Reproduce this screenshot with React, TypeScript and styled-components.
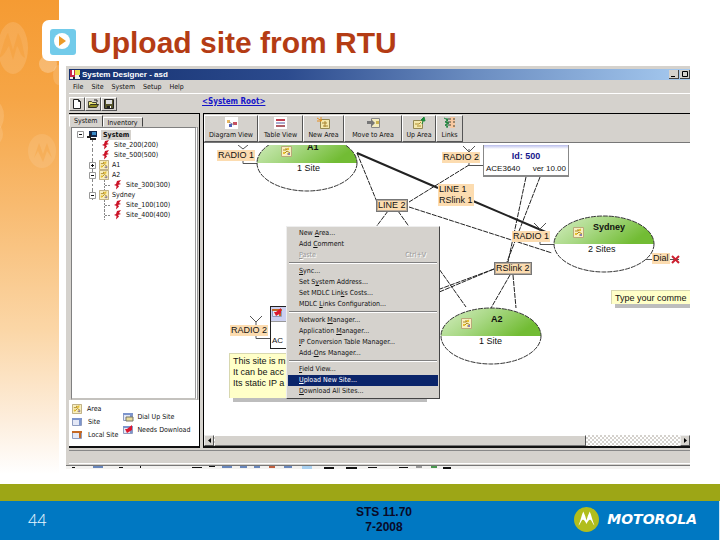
import React from "react";
import styled, { createGlobalStyle, css } from "styled-components";

const ui = `"DejaVu Sans Condensed", "Liberation Sans", sans-serif`;
const sans = `"Liberation Sans", Arial, sans-serif`;
const face = "#d5d2cd";

const Global = createGlobalStyle`
  * { box-sizing: border-box; }
  body { margin: 0; background: #fff; font-family: ${sans}; }
  button { font: inherit; color: inherit; margin: 0; padding: 0; border: 0; background: none; }
  svg { display: block; flex: none; }
`;

const Slide = styled.div`
  min-height: 100vh;
  display: flex;
  flex-direction: column;
  overflow: hidden;
`;

const Upper = styled.div`
  flex: 1;
  display: flex;
  background: #fff;
`;

const Rail = styled.aside`
  width: 59px;
  flex: none;
  overflow: hidden;
  background: linear-gradient(#f59b33 0, #f6a545 20%, #f8bb71 43%, #fbd6a6 68%, #fdeedd 87%, #fff 98%);
`;

const Content = styled.main`
  flex: 1;
  min-width: 0;
  display: flex;
  flex-direction: column;
  padding: 20px 30px 15px 7px;
`;

const Heading = styled.header`
  display: flex;
  align-items: center;
  height: 46px;
  gap: 6px;
  margin-left: -24px;
`;

const Badge = styled.div`
  width: 42px;
  height: 41px;
  margin-bottom: 5px;
  padding: 9px 8px;
  border-radius: 7px;
  background: #fff;
`;

const Title = styled.h1`
  margin: 0 0 1px;
  font-size: 30px;
  line-height: 36px;
  font-weight: bold;
  color: #b43c14;
  white-space: nowrap;
`;

const AppWindow = styled.section`
  flex: 1;
  display: flex;
  flex-direction: column;
  min-width: 0;
  padding: 3px 0 0 3px;
  background: ${face};
  font-family: ${ui};
  font-size: 7px;
  line-height: 10px;
  color: #111;
  overflow: hidden;
`;

const TitleBar = styled.div`
  display: flex;
  align-items: center;
  height: 11px;
  gap: 2px;
  padding-left: 1px;
  color: #fff;
  font-weight: bold;
  background: linear-gradient(90deg, #14306f, #2c4b8e 35%, #6a8cc0 65%, #a6caf0);
`;

const WindowName = styled.span`
  flex: 1;
  font-size: 8px;
  font-family: ${sans};
`;

const WindowControl = styled.button`
  width: 10px;
  height: 9px;
  background: ${face};
  border-right: 1px solid #444;
  border-bottom: 1px solid #444;
  &:last-child { margin-left: -1px; }
`;

const MenuBar = styled.nav`
  display: flex;
  height: 14px;
  gap: 8px;
  padding: 1px 4px 0;
  border-bottom: 1px solid #fff;
`;

const FileBar = styled.div`
  display: flex;
  align-items: center;
  height: 19px;
`;

const FileButton = styled.button`
  width: 16px;
  height: 14px;
  padding: 1px 2px;
  border: 1px solid;
  border-color: #fff #555 #555 #fff;
`;

const RootLink = styled.a`
  margin: 0 0 4px 85px;
  font-size: 8px;
  font-weight: bold;
  color: #1616c8;
`;

const Panes = styled.div`
  flex: 1;
  display: grid;
  grid-template-columns: 131px 1fr;
  gap: 3px;
  min-height: 0;
`;

const Pane = styled.section`
  display: flex;
  flex-direction: column;
  min-width: 0;
  border-top: 1px solid #000;
  border-bottom: 2px solid #111;
`;

const TreePane = styled(Pane)`
  border-right: 1px solid #000;
`;

const DiagramPane = styled(Pane)`
  border-left: 1px solid #000;
`;

const Tabs = styled.div`
  display: flex;
  align-items: flex-end;
  height: 13px;
`;

const Tab = styled.button<{ $active?: boolean }>`
  height: ${(p) => (p.$active ? 12 : 10)}px;
  padding: 0 4px;
  font-size: 7px;
  border: 1px solid;
  border-color: #fff #444 transparent #fff;
`;

const Tree = styled.ul`
  flex: 1;
  margin: 0 1px 0 2px;
  padding: 1px 0 0;
  list-style: none;
  background: #fff;
  border: 1px solid #808080;
  border-right: 3px double #999;
  border-bottom: 2px solid #c4c2be;
`;

const TreeRow = styled.li<{ $level: number; $trunk?: boolean }>`
  display: flex;
  align-items: center;
  gap: 3px;
  height: ${(p) => (p.$level === 0 ? 11 : 10)}px;
  padding-left: ${(p) => [5, 17, 29][p.$level]}px;
  ${(p) => p.$trunk && css`
    background: repeating-linear-gradient(#888 0 2px, transparent 2px 4px) 20px 0 / 1px 100% no-repeat;
  `}
`;

const Leaf = styled.span<{ $bold?: boolean }>`
  ${(p) => p.$bold && css`
    font-weight: bold;
    background: ${face};
    padding: 0 2px;
  `}
`;

const Legend = styled.div`
  display: flex;
  gap: 5px;
  height: 46px;
  padding: 4px 3px;
  background: #fff;
  white-space: nowrap;
`;

const LegendColumn = styled.div<{ $center?: boolean }>`
  display: flex;
  flex-direction: column;
  justify-content: ${(p) => (p.$center ? "center" : "flex-start")};
  gap: 3px;
`;

const LegendItem = styled.span<{ $tight?: boolean }>`
  display: flex;
  align-items: center;
  gap: ${(p) => (p.$tight ? 3 : 5)}px;
  height: 10px;
`;

const ViewBar = styled.div`
  display: flex;
  height: 31px;
  padding-top: 1px;
  border-bottom: 2px solid #fff;
  box-shadow: inset 0 -1px #777;
`;

const ViewButton = styled.button<{ $w: number }>`
  width: ${(p) => p.$w}px;
  height: 27px;
  display: flex;
  flex-direction: column;
  align-items: center;
  white-space: nowrap;
  border: 1px solid;
  border-color: #fff #555 #555 #fff;
  line-height: 9px;
  svg { margin: 1px 0 2px; }
`;

const Canvas = styled.div`
  position: relative;
  flex: 1;
  min-height: 290px;
  overflow: hidden;
  background: #fff;
  font-family: ${sans};
  font-size: 9px;
`;

const Wires = styled.svg`
  position: absolute;
  left: 0;
  top: 0;
  width: 100%;
  height: 100%;
`;

const Node = styled.div<{ $x: number; $y: number }>`
  position: absolute;
  left: ${(p) => p.$x}px;
  top: ${(p) => p.$y}px;
  line-height: 11px;
  white-space: nowrap;
`;

const Port = styled(Node)<{ $framed?: boolean }>`
  padding: 0 1px;
  background: #fcdcb0;
  ${(p) => p.$framed && css`
    border: 1px solid #777;
    outline: 1px solid #b9aa98;
    outline-offset: -2px;
  `}
`;

const AreaName = styled(Node)`
  font-weight: bold;
`;

const DeviceCard = styled(Node)`
  width: 86px;
  height: 32px;
  padding-top: 6px;
  text-align: center;
  background: linear-gradient(#b8bcec, #fff 4px);
  border: 1px solid #888;
  border-top: 0;
  border-bottom-width: 2px;
`;

const DeviceId = styled.strong`
  display: block;
  color: #16168c;
`;

const DeviceInfo = styled.span`
  display: flex;
  justify-content: space-between;
  padding: 1px 2px;
  font-size: 8px;
`;

const LowerCard = styled(Node)`
  width: 86px;
  height: 43px;
  border: 1px solid #222;
  background: #fff;
`;

const CardTop = styled.div`
  height: 15px;
  padding: 1px;
  background: #ccd0f0;
  border-bottom: 1px solid #999;
`;

const CardText = styled.div`
  padding: 13px 1px 0;
  font-size: 8px;
`;

const Note = styled(Node)<{ $w: number; $h: number }>`
  width: ${(p) => p.$w}px;
  height: ${(p) => p.$h}px;
  padding: 2px 3px;
  background: #ffffc8;
  border-top: 1px solid #d8d8b0;
  border-left: 1px solid #d8d8b0;
  box-shadow: 4px 4px #bdbdbd;
`;

const ContextMenu = styled.div`
  position: absolute;
  left: 82px;
  top: 81px;
  width: 154px;
  padding: 1px;
  display: flex;
  flex-direction: column;
  background: ${face};
  border: 1px solid;
  border-color: #eee #444 #444 #eee;
  font-family: ${ui};
  font-size: 7px;
`;

const MenuItem = styled.button<{ $selected?: boolean }>`
  display: flex;
  justify-content: space-between;
  height: 11px;
  line-height: 11px;
  padding: 0 12px 0 11px;
  text-align: left;
  color: ${(p) => (p.$selected ? "#fff" : "#111")};
  background: ${(p) => (p.$selected ? "#0a246a" : "transparent")};
  &:disabled { color: #999; text-shadow: 1px 1px #fff; }
`;

const Separator = styled.hr`
  width: calc(100% - 2px);
  height: 2px;
  margin: 1px 1px 2px;
  border: 0;
  border-top: 1px solid #808080;
  border-bottom: 1px solid #fff;
`;

const ScrollRow = styled.div`
  display: flex;
  height: 11px;
  gap: 1px;
  background: repeating-conic-gradient(#fff 0 25%, ${face} 0 50%) 0 0 / 4px 4px;
`;

const ScrollButton = styled.button`
  width: 10px;
  padding: 2px 3px;
  background: ${face};
  border: 1px solid;
  border-color: #eee #555 #555 #eee;
`;

const Thumb = styled.div`
  flex: 4;
  background: ${face};
  border-top: 1px solid #fff;
  border-right: 1px solid #555;
  border-bottom: 1px solid #777;
`;

const TrackRest = styled.div`
  flex: 1;
`;

const StatusBar = styled.div`
  height: 14px;
  margin: 2px 0 1px;
  border-top: 1px solid #888;
  border-bottom: 1px solid #fff;
`;

const DockStrip = styled.div`
  height: 4px;
  margin-left: -3px;
  background: #f3f2f0;
  border-top: 1px solid #777;
`;

const GreenBand = styled.div`
  height: 17px;
  background: #9da616;
`;

const Footer = styled.footer`
  display: grid;
  grid-template-columns: 59px 1fr auto 1fr;
  align-items: center;
  height: 40px;
  padding-right: 10px;
  background: #0078c2;
  border-right: 1px solid #cfe3f2;
`;

const PageNumber = styled.span`
  padding-left: 28px;
  margin-bottom: 3px;
  font: 300 16px "Open Sans", sans-serif;
  color: #e6f6ff;
`;

const Edition = styled.p`
  grid-column: 3;
  margin: 0 0 3px;
  text-align: center;
  font-size: 12px;
  line-height: 15px;
  font-weight: bold;
  color: #0a0a28;
`;

const Brand = styled.div`
  display: flex;
  align-items: center;
  justify-content: flex-end;
  gap: 8px;
  margin-bottom: 4px;
  padding-right: 12px;
  color: #fff;
  font: italic bold 14px "DejaVu Sans", sans-serif;
`;

const Watermarks = () => (
  <svg width="59" height="200" fill="#fff" aria-hidden="true">
    <ellipse cx="13" cy="48" rx="15" ry="26" opacity=".13" />
    <path d="M-1 58C4 44 4 39 8 33L13 50L18 33C22 39 23 48 25 58C20 56 20 50 17 46L13 60L9 46C6 50 5 55-1 58Z" fill="#f59b33" opacity=".4" />
    <circle cx="48" cy="64" r="9" opacity=".25" />
    <ellipse cx="-4" cy="116" rx="8" ry="14" opacity=".13" />
    <ellipse cx="-4" cy="134" rx="7" ry="10" opacity=".12" />
    <ellipse cx="42" cy="151" rx="14" ry="17" opacity=".1" />
    <path d="M34 158L39 143L43 154L47 143L52 158L47 151L43 162L38 151Z" fill="#f59b33" opacity=".3" />
    <ellipse cx="58" cy="75" rx="5" ry="10" opacity=".14" />
  </svg>
);

const AreaIcon = ({ size = 11 }: { size?: number }) => (
  <svg width={size} height={size} viewBox="0 0 11 11" aria-hidden="true">
    <path d="M.5.500h10v10H.5z" fill="#f8efc0" stroke="#b9a97a" />
    <path d="M2 4h3V2M5 4l3-2M3 8l3-3 3 2M6 8h3" stroke="#b08a20" fill="none" />
    <path d="M6 2h2v2H6zM2 6h2v2H2z" fill="#e8c030" />
    <path d="M7 7h2v2H7z" fill="#8a7fae" />
  </svg>
);

const BoltIcon = () => (
  <svg width="10" height="10" viewBox="0 0 10 10" aria-hidden="true">
    <path d="M8 0L4 1L3 4L1 5L3.500 6L3 9.500L6 6.500L5 5L8 4L6 3Z" fill="#cc1428" />
  </svg>
);

const Expander = ({ open }: { open?: boolean }) => (
  <svg width="7" height="7" aria-hidden="true">
    <path d="M.5.500h6v6h-6z" fill="#fff" stroke="#999" />
    <path d={open ? "M2 3.500h3" : "M2 3.500h3M3.500 2v3"} stroke="#111" />
  </svg>
);

const RootIcon = () => (
  <svg width="11" height="10" aria-hidden="true">
    <path d="M2 1h8v6H2z" fill="#14284c" />
    <path d="M5 2h4v3H5z" fill="#3a8cc8" />
    <path d="M0 7h3V4M3 9h6" stroke="#222" fill="none" strokeWidth="2" />
  </svg>
);

const SiteIcon = ({ top, bolt, dial }: { top: string; bolt?: boolean; dial?: boolean }) => (
  <svg width="11" height="10" aria-hidden="true">
    <path d="M.5 1.500h9v7h-9z" fill="#e4e8f6" stroke="#8e9cc0" />
    <path d="M0 1h10v2H0zM7 3h2v5H7z" fill={top} />
    {bolt && <path d="M9 0L4 4L2 4L4 8L9 5Z" fill="#dc1830" />}
    {dial && <path d="M3 5h7v4H3z" fill="#eadc9c" stroke="#776" />}
  </svg>
);

const toolArt: Record<string, React.ReactNode> = {
  "Diagram View": <><path d="M0 0h13v12H0z" fill="#fff" /><path d="M2 3h3v3H2z" fill="#e8b860" /><path d="M4 7h3v3H4z" fill="#5060b8" /><path d="M8 5h4v3H8z" fill="#c85060" /><path d="M4 5l5 3" stroke="#889" /></>,
  "Table View": <><path d="M0 0h13v12H0z" fill="#fff" /><path d="M2 3h9" stroke="#c04050" strokeWidth="2" /><path d="M2 6h9" stroke="#555aa0" /><path d="M2 9h9" stroke="#b06068" strokeWidth="2" /></>,
  "New Area": <><path d="M3.500 2.500h9v9h-9z" fill="#f4e8ac" stroke="#948852" /><path d="M5 6h5M6 9h5M8 4v6" stroke="#a88430" /><path d="M0 1l5 3M4 0v4M0 4h4" stroke="#e89020" /></>,
  "Move to Area": <><path d="M4.500 1.500h8v9h-8z" fill="#f4ecbe" stroke="#888" /><path d="M0 4h4V2l4 4-4 4V7H0z" fill="#777" /><path d="M9 4h3v3H9z" fill="#ccb450" /></>,
  "Up Area": <><path d="M.5 3.500h9v8h-9z" fill="#f4e8ac" stroke="#948852" /><path d="M2 7h4l2-2M4 9h4" stroke="#b09030" fill="none" /><path d="M9 7l2-5M8 3l3-3 1 4z" stroke="#1b8a3a" fill="#1b8a3a" /></>,
  Links: <><path d="M1 1l4 2-3 2 4 1-4 2 3 2M4 1v10" stroke="#158038" fill="none" /><path d="M7 0h5v11H7z" fill="#f8c8a0" /><path d="M5 2h3M5 5h3M5 8h3M10 2h2M10 5h2M10 9h2" stroke="#443" /></>,
};

const tools: [string, number][] = [
  ["Diagram View", 54], ["Table View", 45], ["New Area", 41],
  ["Move to Area", 58], ["Up Area", 34], ["Links", 27],
];

const tree = [
  { name: "Site_200(200)", level: 2 }, { name: "Site_500(500)", level: 2 },
  { name: "A1", level: 1 }, { name: "A2", level: 1, open: true },
  { name: "Site_300(300)", level: 3 }, { name: "Sydney", level: 1, open: true },
  { name: "Site_100(100)", level: 3 }, { name: "Site_400(400)", level: 3 },
];

const menuGroups: { label: [string, string, string]; key?: string; off?: boolean; on?: boolean }[][] = [
  [{ label: ["New ", "A", "rea..."] }, { label: ["Add ", "C", "omment"] }, { label: ["", "P", "aste"], key: "Ctrl+V", off: true }],
  [{ label: ["", "S", "ync..."] }, { label: ["Set S", "y", "stem Address..."] }, { label: ["Set MDLC Lin", "k", "s Costs..."] }, { label: ["MDLC ", "L", "inks Configuration..."] }],
  [{ label: ["Network ", "M", "anager..."] }, { label: ["Application ", "M", "anager..."] }, { label: ["", "I", "P Conversion Table Manager..."] }, { label: ["Add-", "O", "ns Manager..."] }],
  [{ label: ["", "F", "ield View..."] }, { label: ["", "U", "pload New Site..."], on: true }, { label: ["", "D", "ownload All Sites..."] }],
];

const areas = [[103, 18], [400, 99], [287, 191]];

const Diagram = () => (
  <Wires aria-hidden="true">
    <defs>
      <linearGradient id="leaf" x1="0" y1="0" x2="1" y2=".4">
        <stop offset="0" stopColor="#d8efc6" />
        <stop offset=".5" stopColor="#a8d884" />
        <stop offset="1" stopColor="#72bc34" />
      </linearGradient>
    </defs>
    <g fill="none" stroke="#222">
      <path strokeWidth="2" d="M153 8L234 43M269 56L344 88" />
      <path strokeDasharray="5 1" d="M153 8L173 57M205 57L265 20M205 62L348 108M184 66L172 82M194 66L262 162M322 32L304 117M336 32L303 117M290 124L90 198M290 124L90 208M306 130L287 163M309 130L312 163" />
      <path stroke="#555" d="M39 15V18.500H54M34 0L39 4L44 0M265 17V20.500H279M259 1L265 7L271 1M265 4V7M52 191V193.500H66M46 171L52 177L58 171M52 177V181M330 78L336 84L342 78M336 84V88M336 97V99.500H350M441 114.500H449M466 114.500H475" />
      <path stroke="#cc2030" strokeWidth="2" d="M468 111L475 118M475 111L468 118" />
    </g>
    {areas.map(([x, y]) => (
      <g key={x}>
        <ellipse cx={x} cy={y} rx="50" ry="28" fill="#fff" />
        <path d={`M${x - 50} ${y}A50 28 0 0 1 ${x + 50} ${y}Z`} fill="url(#leaf)" />
        <ellipse cx={x} cy={y} rx="50" ry="28" fill="none" stroke="#333" strokeDasharray="5 1" />
      </g>
    ))}
  </Wires>
);

export default function App() {
  return (
    <>
      <Global />
      <Slide>
        <Upper>
          <Rail><Watermarks /></Rail>
          <Content>
            <Heading>
              <Badge>
                <svg width="26" height="26" viewBox="0 0 26 26" aria-hidden="true">
                  <rect width="26" height="26" rx="3" fill="#72cbea" />
                  <circle cx="12" cy="12" r="8" fill="#fff" />
                  <path d="M9 7L16 12L9 17Z" fill="#ec9b28" />
                </svg>
              </Badge>
              <Title>Upload site from RTU</Title>
            </Heading>
            <AppWindow>
              <TitleBar>
                <svg width="10" height="10" aria-hidden="true">
                  <path d="M0 0h5v8H0z" fill="#c82848" /><path d="M5 0h5v5H5z" fill="#e8e050" />
                  <path d="M2 0h2v5H2z" fill="#fff" /><path d="M0 8h10M5 6h4" stroke="#eee" strokeWidth="2" />
                  <path d="M3 7h2v2H3z" fill="#222" />
                </svg>
                <WindowName>System Designer - asd</WindowName>
                <WindowControl aria-label="Minimize"><svg width="8" height="8"><path d="M2 6.500h4" stroke="#000" /></svg></WindowControl>
                <WindowControl aria-label="Maximize"><svg width="8" height="8"><path d="M2.500 1.500h5v5h-5z" stroke="#000" fill="none" /></svg></WindowControl>
              </TitleBar>
              <MenuBar>
                {["File", "Site", "System", "Setup", "Help"].map((m) => <button key={m}>{m}</button>)}
              </MenuBar>
              <FileBar>
                <FileButton aria-label="New"><svg width="10" height="10"><path d="M1.500.500h5l2 2v7h-7z" fill="#fff" stroke="#222" /><path d="M6.500.500v2h2" fill="none" stroke="#222" /></svg></FileButton>
                <FileButton aria-label="Open"><svg width="11" height="10"><path d="M.5 8.500v-6h3l1 1h4v2" fill="#e8e478" stroke="#443" /><path d="M.5 8.500l2-3h8l-2 3z" fill="#8e8a20" stroke="#332" /><path d="M6 1h3v2" stroke="#222" fill="none" /></svg></FileButton>
                <FileButton aria-label="Save"><svg width="10" height="10"><path d="M.5.500h9v9h-9z" fill="#56552c" stroke="#222" /><path d="M2 1h6v4H2z" fill="#ddd" /><path d="M3 7h4v2H3z" fill="#222" /><path d="M6 7h1v2H6z" fill="#fff" /></svg></FileButton>
                <RootLink href="#root">&lt;System Root&gt;</RootLink>
              </FileBar>
              <Panes>
                <TreePane>
                  <Tabs role="tablist">
                    <Tab role="tab" aria-selected="true" $active>System</Tab>
                    <Tab role="tab" aria-selected="false">Inventory</Tab>
                  </Tabs>
                  <Tree>
                    <TreeRow $level={0}><Expander open /><RootIcon /><Leaf $bold>System</Leaf></TreeRow>
                    {tree.map((n, i) => (
                      <TreeRow key={n.name} $level={n.level === 1 ? 1 : 2} $trunk={i < 6}>
                        {n.level === 1 && <><Expander open={n.open} /><AreaIcon size={10} /></>}
                        {n.level === 3 && <svg width="9" height="10" aria-hidden="true"><path d="M3.500 0V10M4 5.500H9" stroke="#888" strokeDasharray="2 1" fill="none" /></svg>}
                        {n.level !== 1 && <BoltIcon />}
                        <Leaf>{n.name}</Leaf>
                      </TreeRow>
                    ))}
                  </Tree>
                  <Legend>
                    <LegendColumn>
                      <LegendItem><AreaIcon size={10} />Area</LegendItem>
                      <LegendItem><SiteIcon top="#7c94cc" />Site</LegendItem>
                      <LegendItem><SiteIcon top="#c46824" />Local Site</LegendItem>
                    </LegendColumn>
                    <LegendColumn $center>
                      <LegendItem $tight><SiteIcon top="#7c94cc" dial />Dial Up Site</LegendItem>
                      <LegendItem $tight><SiteIcon top="#7c94cc" bolt />Needs Download</LegendItem>
                    </LegendColumn>
                  </Legend>
                </TreePane>
                <DiagramPane>
                  <ViewBar>
                    {tools.map(([name, w]) => (
                      <ViewButton key={name} $w={w}>
                        <svg width="13" height="12" aria-hidden="true">{toolArt[name]}</svg>
                        {name}
                      </ViewButton>
                    ))}
                  </ViewBar>
                  <Canvas>
                    <Diagram />
                    <Port $x={13} $y={5}>RADIO 1</Port>
                    <Port $x={238} $y={7}>RADIO 2</Port>
                    <Port $x={234} $y={39}>LINE 1<br />RSlink 1</Port>
                    <Port $x={172} $y={54} $framed>LINE 2</Port>
                    <Port $x={308} $y={86}>RADIO 1</Port>
                    <Port $x={290} $y={117} $framed>RSlink 2</Port>
                    <Port $x={448} $y={108}>Dial</Port>
                    <Port $x={26} $y={180}>RADIO 2</Port>
                    <Node $x={77} $y={1}><AreaIcon /></Node>
                    <AreaName $x={103} $y={-3}>A1</AreaName>
                    <Node $x={93} $y={18}>1 Site</Node>
                    <Node $x={369} $y={82}><AreaIcon /></Node>
                    <AreaName $x={389} $y={77}>Sydney</AreaName>
                    <Node $x={384} $y={99}>2 Sites</Node>
                    <Node $x={257} $y={173}><AreaIcon /></Node>
                    <AreaName $x={287} $y={169}>A2</AreaName>
                    <Node $x={275} $y={191}>1 Site</Node>
                    <DeviceCard $x={279} $y={0}>
                      <DeviceId>Id: 500</DeviceId>
                      <DeviceInfo><span>ACE3640</span><span>ver 10.00</span></DeviceInfo>
                    </DeviceCard>
                    <LowerCard $x={66} $y={161}>
                      <CardTop><SiteIcon top="#c46824" bolt /></CardTop>
                      <CardText>AC</CardText>
                    </LowerCard>
                    <Note $x={407} $y={145} $w={110} $h={14}>Type your comme</Note>
                    <Note $x={25} $y={208} $w={194} $h={45}>
                      This site is m<br />It can be acc<br />Its static IP a
                    </Note>
                    <ContextMenu role="menu">
                      {menuGroups.map((group, i) => (
                        <React.Fragment key={i}>
                          {i > 0 && <Separator />}
                          {group.map(({ label, key, off, on }) => (
                            <MenuItem key={label.join("")} role="menuitem" disabled={off} $selected={on}>
                              <span>{label[0]}<u>{label[1]}</u>{label[2]}</span>
                              {key && <span>{key}</span>}
                            </MenuItem>
                          ))}
                        </React.Fragment>
                      ))}
                    </ContextMenu>
                  </Canvas>
                  <ScrollRow>
                    <ScrollButton aria-label="Scroll left"><svg width="4" height="5"><path d="M3 0v5L0 2.500z" /></svg></ScrollButton>
                    <Thumb />
                    <TrackRest />
                    <ScrollButton aria-label="Scroll right"><svg width="4" height="5"><path d="M0 0v5l3-2.500z" /></svg></ScrollButton>
                  </ScrollRow>
                </DiagramPane>
              </Panes>
              <StatusBar />
              <DockStrip>
                <svg width="400" height="3" aria-hidden="true" fill="#111">
                  <path d="M6 1h3v1H6zM53 1h4v1h-4zM74 0h1v2h-1zM126 1h10v1h-10zM143 0h6v1h-6zM258 1h10v2h-10zM280 1h11v2h-11zM302 1h9v1h-9zM333 1h9v1h-9zM377 1h8v2h-8z" />
                  <path d="M27 0h10v2H27zM156 0h10v2h-10zM174 0h7v2h-7zM188 0h6v2h-6zM218 0h8v2h-8z" fill="#6a88bc" />
                  <path d="M236 0h10v3h-10z" fill="#a8d0f0" /><path d="M203 0h6v2h-6z" fill="#c06040" /><path d="M350 0h6v2h-6z" fill="#999" /><path d="M365 0h6v2h-6z" fill="#4a9850" />
                </svg>
              </DockStrip>
            </AppWindow>
          </Content>
        </Upper>
        <GreenBand />
        <Footer>
          <PageNumber>44</PageNumber>
          <Edition>STS 11.70<br />7-2008</Edition>
          <Brand>
            <svg width="25" height="25" viewBox="0 0 25 25" aria-hidden="true">
              <circle cx="12.500" cy="12.500" r="12.500" fill="#b1bd1c" />
              <path d="M4.500 18.500C6.500 14 7.500 8 9.300 4.500C10.800 7.500 11.800 10.500 12.500 13.500C13.200 10.500 14.200 7.500 15.700 4.500C17.500 8 18.500 14 20.500 18.500C19 17.500 18.500 15 17 13.200C15.500 11.800 14 13.500 12.500 17C11 13.500 9.500 11.800 8 13.200C6.500 15 6 17.500 4.500 18.500Z" fill="#fff" />
            </svg>
            MOTOROLA
          </Brand>
        </Footer>
      </Slide>
    </>
  );
}
